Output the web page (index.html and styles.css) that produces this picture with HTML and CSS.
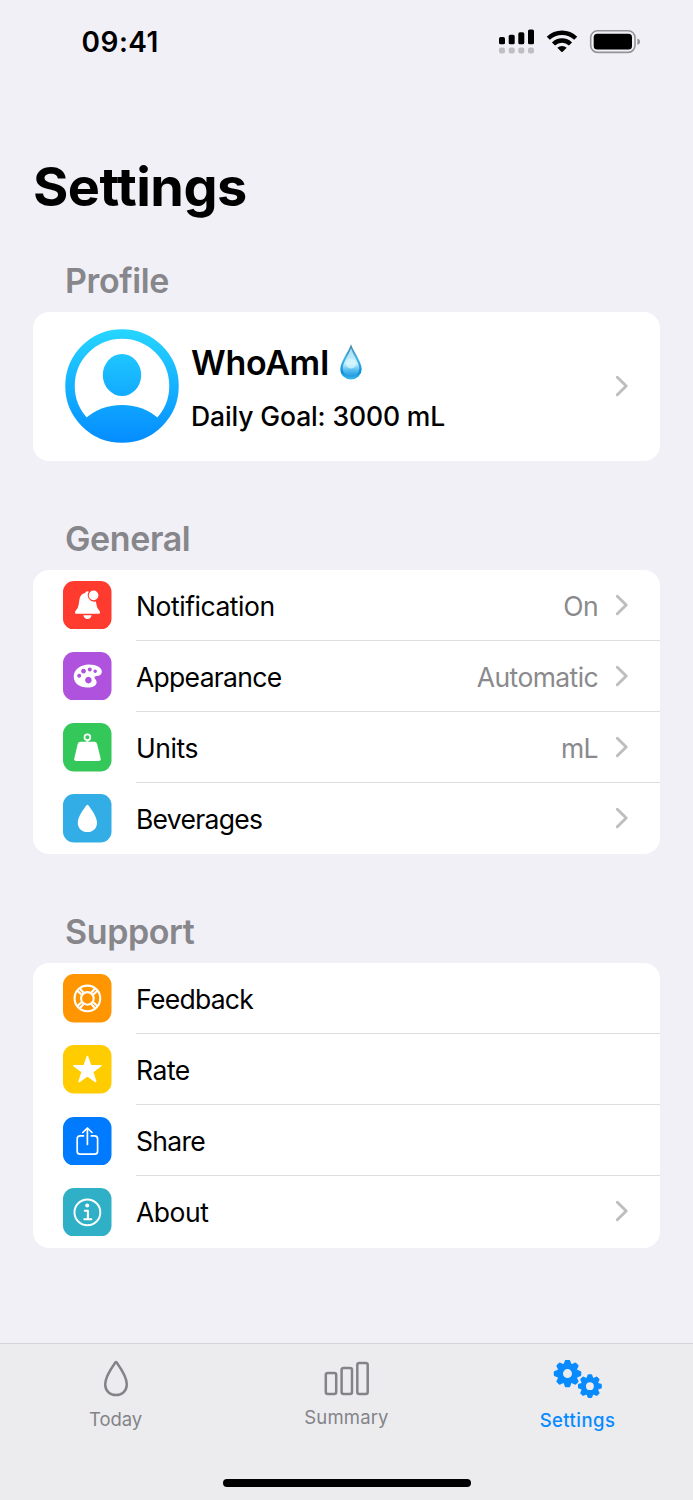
FILE: index.html
```html
<!DOCTYPE html>
<html lang="en">
<head>
<meta charset="utf-8">
<title>Settings</title>
<link rel="stylesheet" href="styles.css">
</head>
<body>
<div class="screen">
  <header class="status">
    <span class="time">09:41</span>
    <svg class="status-icons" viewBox="498 26 144 30" width="144" height="30">
      <g fill="#000"><rect x="499" y="36.1" width="6" height="7.2" rx="1.6"/><rect x="508.7" y="33.8" width="6" height="9.5" rx="1.6"/><rect x="518.3" y="31.3" width="6" height="12" rx="1.6"/><rect x="528" y="28.5" width="6" height="14.8" rx="1.6"/></g>
      <g fill="#bfbfc3"><rect x="499" y="46.600" width="6" height="6" rx="2"/><rect x="508.7" y="46.600" width="6" height="6" rx="2"/><rect x="518.3" y="46.600" width="6" height="6" rx="2"/><rect x="528" y="46.600" width="6" height="6" rx="2"/></g>
      <g fill="none" stroke="#000" stroke-width="4.4"><path d="M548.3 37.3a19.6 19.6 0 0 1 27.400 0"/><path d="M553.5 43a12.200 12.200 0 0 1 17 0"/></g>
      <path d="M557.3 46.700a7 7 0 0 1 9.400 0l-4 4.100q-.7.6-1.400 0z"/>
      <rect x="590.7" y="29.700" width="44.300" height="21.700" rx="6.800" fill="none" stroke="#949498" stroke-width="1.600"/>
      <rect x="593.700" y="32.800" width="38.300" height="15.700" rx="3.500" fill="#000"/>
      <path d="M637.400 37.600q2.800 1 2.800 3.200t-2.800 3.200z" fill="#949498"/>
    </svg>
  </header>

  <main class="content">
    <h1 class="title">Settings</h1>

    <section class="section">
      <h2 class="heading">Profile</h2>
      <div class="card profile">
        <svg class="avatar" viewBox="0 0 114 114" width="114" height="114">
          <defs><linearGradient id="avatar-fill" gradientUnits="userSpaceOnUse" x1="0" y1="0" x2="0" y2="114"><stop offset="0" stop-color="#26d6ff"/><stop offset="1" stop-color="#048cff"/></linearGradient></defs>
          <circle cx="57" cy="57" r="52" fill="none" stroke="url(#avatar-fill)" stroke-width="9.500"/>
          <ellipse cx="57" cy="46" rx="19.200" ry="21" fill="url(#avatar-fill)"/>
          <path d="M20 90Q35 76 57 76T94 90A49.500 49.500 0 0 1 20 90z" fill="url(#avatar-fill)"/>
        </svg>
        <div class="profile-text">
          <div class="name"><span>WhoAmI</span>
            <svg class="drop" viewBox="0 0 22 36" width="22" height="36">
              <defs>
                <linearGradient id="drop-edge" x1="0" y1="0" x2="0" y2="1"><stop offset="0" stop-color="#3b7ea6"/><stop offset=".4" stop-color="#43b6e8"/><stop offset=".8" stop-color="#0f8fd8"/><stop offset="1" stop-color="#3cb9ef"/></linearGradient>
                <linearGradient id="drop-core" x1="0" y1="0" x2="0" y2="1"><stop offset="0" stop-color="#a9dcf3"/><stop offset=".55" stop-color="#c2f0ff"/><stop offset=".78" stop-color="#55bdf0"/><stop offset="1" stop-color="#2199de"/></linearGradient>
              </defs>
              <path d="M11 .3C13 7 21.700 17.500 21.700 25.200a10.700 10.200 0 0 1-21.400 0C.3 17.500 9 7 11 .3z" fill="url(#drop-edge)"/>
              <path d="M11 4C12.500 10 19.300 18.500 19.300 24.500a8.300 8 0 0 1-16.600 0C2.700 18.500 9.500 10 11 4z" fill="url(#drop-core)"/>
              <ellipse cx="11" cy="19.500" rx="5" ry="5" fill="#dbf8ff" opacity=".7"/>
            </svg>
          </div>
          <div class="goal">Daily Goal: 3000 mL</div>
        </div>
        <svg class="chevron" viewBox="0 0 14 22" width="14" height="22"><path d="M2.300 2.300 11.200 11 2.300 19.700"/></svg>
      </div>
    </section>

    <section class="section">
      <h2 class="heading">General</h2>
      <ul class="card list">
        <li class="row">
          <svg class="tile red" viewBox="0 0 48.500 48.500">
            <rect class="tile-bg" width="48.500" height="48.500" rx="11"/>
            <path d="M12.500 32.700q-1.200-1.300 0-2.700 2.700-2.500 3.200-6.500l.8-5.500q1-5 5.600-6 .6-1.800 2.200-1.800 1 0 1.500.5a6.600 6.600 0 0 0 7.100 9.900l.5 3q.6 4 3.100 6.400 1.200 1.400 0 2.700z"/><path d="M20.300 34.200h8.300q-.8 3.700-4.150 3.700t-4.150-3.700z"/><circle cx="30.600" cy="14.400" r="4.800"/>
          </svg>
          <div class="row-body"><span class="label">Notification</span><span class="value">On</span><svg class="chevron" viewBox="0 0 14 22" width="14" height="22"><path d="M2.300 2.300 11.200 11 2.300 19.700"/></svg></div>
        </li>
        <li class="row">
          <svg class="tile purple" viewBox="0 0 48.500 48.500">
            <rect class="tile-bg" width="48.500" height="48.500" rx="11"/>
            <path fill-rule="evenodd" d="M26 12.400c7.500 0 12.800 3.100 12.800 7 0 3.800-2.800 4.300-5 4.600-2 .3-2.800 1-2 2.600.7 1.200 1.800 1.700 1.800 3.800 0 3-4 5.200-9 5.200-8.200 0-13.900-4.200-13.900-11C10.700 17.500 17.500 12.400 26 12.400zM16.200 21.700a2 2 0 1 0 .01 0zM20.500 16.700a2.400 2.400 0 1 0 .01 0zM26.800 15.500a2 2 0 1 0 .01 0zM32.200 17.500a1.700 1.700 0 1 0 .01 0zM25.400 24.800a3.300 3.300 0 1 0 .01 0z"/>
          </svg>
          <div class="row-body"><span class="label tight">Appearance</span><span class="value">Automatic</span><svg class="chevron" viewBox="0 0 14 22" width="14" height="22"><path d="M2.300 2.300 11.200 11 2.300 19.700"/></svg></div>
        </li>
        <li class="row">
          <svg class="tile green" viewBox="0 0 48.500 48.500">
            <rect class="tile-bg" width="48.500" height="48.500" rx="11"/>
            <circle cx="24.400" cy="14.200" r="2.900" fill="none" stroke="#fff" stroke-width="1.700"/><path d="M23.500 17h1.800v2.500h-1.800z"/><path d="M17.500 18.800h13.800q2.200 0 2.800 2.200l3.500 14.200q.7 2.700-2 2.700H13.300q-2.700 0-2-2.700L14.700 21q.6-2.200 2.800-2.200z"/>
          </svg>
          <div class="row-body"><span class="label">Units</span><span class="value">mL</span><svg class="chevron" viewBox="0 0 14 22" width="14" height="22"><path d="M2.300 2.300 11.200 11 2.300 19.700"/></svg></div>
        </li>
        <li class="row">
          <svg class="tile sky" viewBox="0 0 48.500 48.500">
            <rect class="tile-bg" width="48.500" height="48.500" rx="11"/>
            <path d="M23.500 11.200q.9-1 1.800 0C28 14.800 34 22.500 34 28.700c0 5.500-4 9.400-9.600 9.400s-9.600-3.900-9.600-9.400c0-6.200 6-13.900 8.700-17.500z"/>
          </svg>
          <div class="row-body"><span class="label tight">Beverages</span><svg class="chevron" viewBox="0 0 14 22" width="14" height="22"><path d="M2.300 2.300 11.200 11 2.300 19.700"/></svg></div>
        </li>
      </ul>
    </section>

    <section class="section">
      <h2 class="heading">Support</h2>
      <ul class="card list">
        <li class="row">
          <svg class="tile orange" viewBox="0 0 48.500 48.500">
            <rect class="tile-bg" width="48.500" height="48.500" rx="11"/>
            <g fill="none" stroke="#fff" stroke-width="2.100"><circle cx="24.400" cy="24.400" r="12.800"/><circle cx="24.400" cy="24.400" r="6.300"/><path d="m14.200 16.600 4.300 3.900M16.500 14.300l3.900 4.200M34.600 16.600l-4.300 3.900M32.300 14.300l-3.900 4.200M14.200 32.200l4.300-3.900M16.500 34.500l3.900-4.200M34.600 32.200l-4.300-3.900M32.300 34.500l-3.900-4.200"/></g>
          </svg>
          <div class="row-body"><span class="label tight">Feedback</span></div>
        </li>
        <li class="row">
          <svg class="tile yellow" viewBox="0 0 48.500 48.500">
            <rect class="tile-bg" width="48.500" height="48.500" rx="11"/>
            <path stroke="#fff" stroke-width="1.600" stroke-linejoin="round" d="m24.400 11.500 3.100 9.100 10.400.1-8.300 6.100 3 9.700-8.200-5.900-8.200 5.900 3-9.700-8.300-6.100 10.400-.1z"/>
          </svg>
          <div class="row-body"><span class="label">Rate</span></div>
        </li>
        <li class="row">
          <svg class="tile blue" viewBox="0 0 48.500 48.500">
            <rect class="tile-bg" width="48.500" height="48.500" rx="11"/>
            <path fill="none" stroke="#fff" stroke-width="1.700" stroke-linecap="round" stroke-linejoin="round" d="M20.500 18.900h-3.300q-3 0-3 3v12.300q0 3 3 3h14.400q3 0 3-3V21.900q0-3-3-3h-3.300M24.400 27.500V11.300M19.800 15.500l4.600-4.500 4.600 4.500"/>
          </svg>
          <div class="row-body"><span class="label tight">Share</span></div>
        </li>
        <li class="row">
          <svg class="tile teal" viewBox="0 0 48.500 48.500">
            <rect class="tile-bg" width="48.500" height="48.500" rx="11"/>
            <circle cx="24.400" cy="24.400" r="12.900" fill="none" stroke="#fff" stroke-width="1.900"/><circle cx="24.200" cy="17.500" r="2"/><path fill="none" stroke="#fff" stroke-width="2.100" stroke-linecap="round" stroke-linejoin="round" d="M21.800 22.800h3.100v8.400M21.300 31.300h7"/>
          </svg>
          <div class="row-body"><span class="label">About</span><svg class="chevron" viewBox="0 0 14 22" width="14" height="22"><path d="M2.300 2.300 11.200 11 2.300 19.700"/></svg></div>
        </li>
      </ul>
    </section>
  </main>

  <footer class="tabbar">
    <nav class="tabs">
      <a class="tab tab-today">
        <svg viewBox="0 0 52 40" width="52" height="40"><path d="M25.300 2.500q.7-.9 1.400 0C30 7.200 36.800 16.300 36.800 24.200c0 6.600-4.500 10.900-10.800 10.900s-10.800-4.300-10.800-10.900C15.200 16.300 22 7.200 25.300 2.500z" fill="none" stroke="#838388" stroke-width="2.500"/></svg>
        <span>Today</span>
      </a>
      <a class="tab tab-summary">
        <svg viewBox="0 0 52 40" width="52" height="40"><g fill="none" stroke="#838388" stroke-width="2.500"><rect x="4.800" y="12.900" width="10.400" height="21" rx="2"/><rect x="20.600" y="8" width="10.400" height="25.900" rx="2"/><rect x="36.300" y="2.900" width="10.400" height="31" rx="2"/></g></svg>
        <span>Summary</span>
      </a>
      <a class="tab tab-settings">
        <svg viewBox="0 0 52 40" width="52" height="40">
          <defs><g id="gear"><circle r="7.500" fill="none" stroke="#078bff" stroke-width="6"/><g id="teeth"><path id="tooth" d="M-3.800-9.500-2.700-12.800Q-2.300-13.700-1.400-13.700H1.400Q2.300-13.700 2.700-12.800L3.800-9.500z" fill="#078bff"/><use href="#tooth" transform="rotate(45)"/><use href="#tooth" transform="rotate(90)"/><use href="#tooth" transform="rotate(135)"/></g><use href="#teeth" transform="rotate(180)"/></g></defs>
          <use href="#gear" transform="translate(15.500 13.600)"/>
          <use href="#gear" transform="translate(37.900 26.200) scale(.87)"/>
        </svg>
        <span>Settings</span>
      </a>
    </nav>
    <div class="home"></div>
  </footer>
</div>
</body>
</html>
```
FILE: styles.css
```css
* { box-sizing: border-box; }
body { margin: 0; background: #f1f0f6; color: #000; font-family: Inter, "Liberation Sans", sans-serif; }
.screen { width: 693px; height: 1500px; display: flex; flex-direction: column; overflow: hidden; }
.status { height: 83px; padding: 0 51px 0 81.500px; display: flex; align-items: center; justify-content: space-between; }
.time { font-size: 28px; font-weight: 600; letter-spacing: .5px; white-space: nowrap; }
.content { flex: 1; padding: 72px 33px 0; }
.title { margin: 0 0 41px; font-size: 54px; line-height: 64px; font-weight: 700; letter-spacing: -.5px; }
.section { margin-bottom: 57px; }
.heading { margin: 0; padding: 0 0 10px 32px; font-size: 34px; line-height: 42px; font-weight: 600; letter-spacing: -.4px; color: #86868b; }
.card { margin: 0; padding: 0; background: #fff; border-radius: 16px; overflow: hidden; list-style: none; }
.profile { height: 148.500px; padding: 0 31.500px; display: flex; align-items: center; }
.avatar { flex: none; margin-right: 12.500px; }
.profile-text { flex: 1; padding-top: 2px; }
.name { display: flex; align-items: center; gap: 11px; font-size: 34px; line-height: 48px; font-weight: 600; letter-spacing: -.3px; }
.drop { margin-top: -1px; }
.goal { font-size: 26.500px; line-height: 40px; margin-top: 9px; font-weight: 500; letter-spacing: -.12px; white-space: nowrap; }
.chevron { flex: none; fill: none; stroke: #bebec1; stroke-width: 3; stroke-linecap: round; stroke-linejoin: round; }
.list { height: 284.500px; display: grid; grid-template-rows: repeat(4, 1fr); }
.row { display: flex; align-items: center; padding-left: 30.300px; }
.tile { width: 48.500px; height: 48.500px; flex: none; fill: #fff; }
.red .tile-bg { fill: #ff3b30; }
.purple .tile-bg { fill: #af52de; }
.green .tile-bg { fill: #34c759; }
.sky .tile-bg { fill: #32ade6; }
.orange .tile-bg { fill: #ff9500; }
.yellow .tile-bg { fill: #ffcc00; }
.blue .tile-bg { fill: #007aff; }
.teal .tile-bg { fill: #30b0c7; }
.row-body { flex: 1; align-self: stretch; margin-left: 24.200px; padding-right: 31.500px; display: flex; align-items: center; border-bottom: 1px solid #dddddf; font-size: 26.500px; letter-spacing: -.45px; }
.row:last-child .row-body { border-bottom-color: transparent; }
.label { flex: 1; padding-top: 2px; }
.tight { letter-spacing: -.7px; }
.value { margin-right: 16.500px; padding-top: 2px; letter-spacing: -.6px; color: #8a8a8d; }
.tabbar { height: 157px; flex: none; border-top: 1px solid #d5d4d8; background: #ececef; display: flex; flex-direction: column; justify-content: space-between; align-items: center; padding-bottom: 13px; }
.tabs { width: 100%; display: grid; grid-template-columns: repeat(3, 1fr); padding-top: 16px; }
.tab { display: flex; flex-direction: column; align-items: center; font-size: 18.500px; line-height: 24px; color: #838388; }
.tab span { white-space: nowrap; }
.tab-today span { margin-top: 7px; letter-spacing: -.1px; }
.tab-summary span { margin-top: 5px; letter-spacing: .15px; }
.tab-settings span { margin-top: 8px; letter-spacing: .45px; }
.tab-settings { color: #078bff; font-weight: 500; }
.home { width: 248px; height: 8.500px; border-radius: 5px; background: #000; }
```
